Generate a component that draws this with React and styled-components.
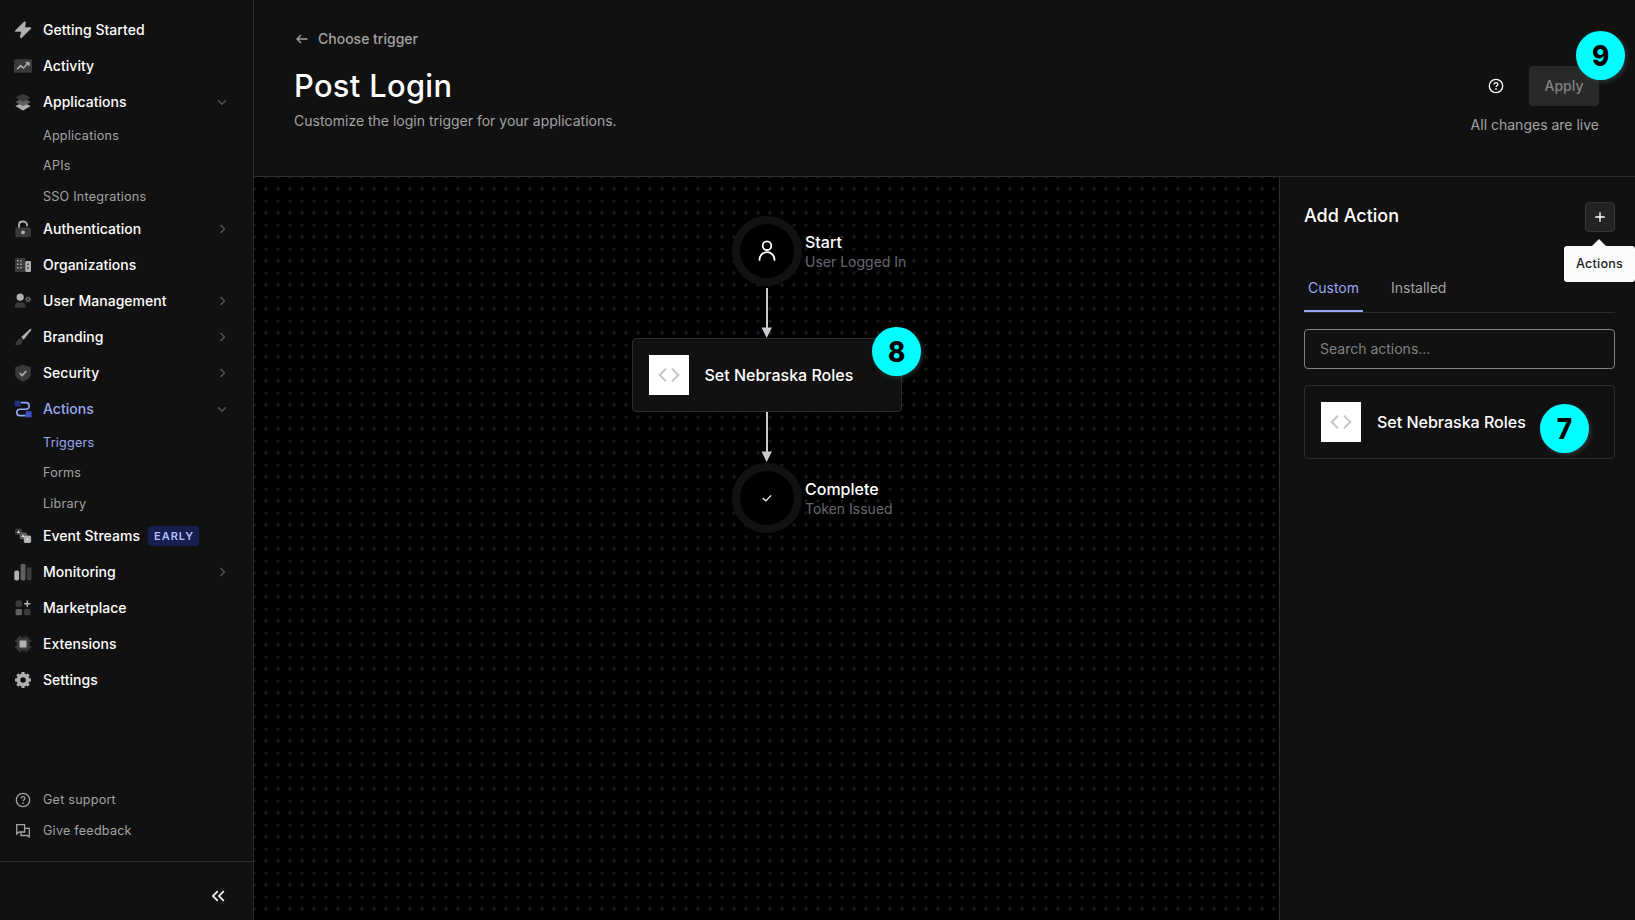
import React from 'react';
import styled, { createGlobalStyle, css } from 'styled-components';

const Global = createGlobalStyle`
  *, *::before, *::after { box-sizing: border-box; }
  body {
    margin: 0;
    background: #111;
    color: #fff;
    font-family: Inter, "Liberation Sans", sans-serif;
    font-size: 14px;
  }
  h1, h2, p { margin: 0; }
  svg { display: block; flex: none; }
  button { font: inherit; cursor: pointer; }
`;

/* ---------- shell ---------- */

const Shell = styled.div`
  display: grid;
  grid-template-columns: 254px 1fr;
  height: 100vh;
  min-height: 920px;
  overflow: hidden;
`;

const Sidebar = styled.aside`
  display: flex;
  flex-direction: column;
  background: #111;
  border-right: 1px solid #2e2e2e;
`;

const Nav = styled.nav`
  flex: 1;
  padding-top: 11.5px;
`;

const NavRow = styled.a`
  display: flex;
  align-items: center;
  height: 36px;
  padding: 0 22px 0 14px;
  font-weight: 500;
  font-size: 14px;
  letter-spacing: 0.03px;
  color: ${(p) => (p.$active ? '#99a7f1' : '#fff')};
  white-space: nowrap;
`;

const NavLabel = styled.span`
  margin-left: 11px;
`;

const NavChevron = styled.span`
  margin-left: auto;
  color: #555;
`;

const SubRow = styled.a`
  display: flex;
  align-items: center;
  height: 30.4px;
  padding: 1.3px 0 0 43px;
  font-size: 12.6px;
  letter-spacing: 0.22px;
  color: ${(p) => (p.$active ? '#99a7f1' : '#a3a3a3')};
`;

const EarlyTag = styled.span`
  display: flex;
  align-items: center;
  height: 20px;
  margin-left: 8px;
  padding: 0 5px 0 6px;
  border-radius: 4px;
  background: #171e50;
  color: #b2bcf5;
  font-size: 11px;
  font-weight: 600;
  letter-spacing: 1px;
`;

const SupportLinks = styled.div`
  display: flex;
  flex-direction: column;
  padding-bottom: 15px;
`;

const SupportRow = styled.a`
  display: flex;
  align-items: center;
  gap: 12px;
  height: 31px;
  padding: 0 0 0 15px;
  font-size: 12.6px;
  letter-spacing: 0.22px;
  color: #a3a3a3;
`;

const CollapseBar = styled.div`
  display: flex;
  justify-content: flex-end;
  align-items: center;
  height: 59px;
  padding: 10px 27px 0 0;
  border-top: 1px solid #2e2e2e;
`;

const Main = styled.main`
  display: grid;
  grid-template-rows: 177px 1fr;
  min-width: 0;
`;

/* ---------- header ---------- */

const Header = styled.header`
  display: flex;
  justify-content: space-between;
  padding: 0 36px 0 40px;
  border-bottom: 1px solid #2e2e2e;
`;

const Heading = styled.div`
  display: flex;
  flex-direction: column;
  padding-top: 28px;
`;

const BackLink = styled.a`
  display: flex;
  align-items: center;
  gap: 8px;
  height: 22px;
  padding-bottom: 1px;
  font-size: 14px;
  font-weight: 500;
  color: #a3a3a3;
`;

const Title = styled.h1`
  margin-top: 16px;
  font-size: 30.800px;
  line-height: 40px;
  font-weight: 500;
  letter-spacing: 0.35px;
`;

const Subtitle = styled.p`
  margin-top: 4px;
  font-size: 14px;
  line-height: 22px;
  color: #a3a3a3;
`;

const HeaderSide = styled.div`
  display: flex;
  flex-direction: column;
  align-items: flex-end;
  padding-top: 66px;
`;

const HeaderActions = styled.div`
  display: flex;
  align-items: center;
  gap: 25px;
`;

const ApplyButton = styled.button`
  position: relative;
  width: 70px;
  height: 40px;
  padding: 0 0 2px;
  border: 0;
  border-radius: 4px;
  background: #292929;
  color: #828282;
  font-size: 14px;
  font-weight: 500;
`;

const Status = styled.p`
  margin-top: 8px;
  font-size: 14px;
  line-height: 22px;
  color: #a3a3a3;
`;

/* ---------- numbered markers ---------- */

const MarkerDisc = styled.span`
  position: absolute;
  top: ${(p) => p.$top}px;
  right: ${(p) => p.$right}px;
  display: flex;
  align-items: center;
  justify-content: center;
  width: 49px;
  height: 49px;
  padding-left: 1px;
  border-radius: 50%;
  background: #00ffff;
  color: #000;
  box-shadow: 2px 2px 4px rgba(60, 75, 75, 0.6);
`;

const MarkerDigit = styled.span`
  font-size: 29px;
  font-weight: 800;
  transform: scaleX(0.9);
`;

const Marker = ({ children, top, right }) => (
  <MarkerDisc $top={top} $right={right}>
    <MarkerDigit>{children}</MarkerDigit>
  </MarkerDisc>
);

/* ---------- canvas ---------- */

const Workspace = styled.div`
  display: grid;
  grid-template-columns: 1fr 356px;
  min-height: 0;
`;

const Canvas = styled.section`
  display: flex;
  flex-direction: column;
  align-items: center;
  padding-top: 39px;
  background-color: #000;
  background-image: radial-gradient(circle at 6px 6px, #1b1b20 0.8px, transparent 2.2px);
  background-size: 12px 12px;
  background-position: 6px 6px;
`;

const Stop = styled.div`
  position: relative;
  display: flex;
  align-items: center;
  justify-content: center;
  width: 70px;
  height: 70px;
  border: 8px solid #111;
  border-radius: 50%;
  background: #000;
`;

const StopText = styled.div`
  position: absolute;
  left: 65.5px;
  top: 8px;
  white-space: nowrap;
`;

const StopTitle = styled.p`
  font-size: 16px;
  line-height: 20px;
  font-weight: 500;
`;

const StopNote = styled.p`
  font-size: 14px;
  line-height: 20px;
  color: #65676e;
`;

const Connector = styled.svg`
  margin-top: ${(p) => p.$before || 0}px;
  margin-bottom: ${(p) => p.$after || 0}px;
`;

const ActionCard = styled.div`
  position: relative;
  display: flex;
  align-items: center;
  gap: 16px;
  width: ${(p) => p.$width || 'auto'};
  height: 74px;
  padding: 0 16px;
  border: 1px solid #2e2e2e;
  border-radius: 4px;
  background: #111;
  font-size: 16px;
  font-weight: 500;
`;

const CodeTile = styled.span`
  display: flex;
  align-items: center;
  justify-content: center;
  width: 40px;
  height: 40px;
  background: #fff;
`;

/* ---------- side panel ---------- */

const Panel = styled.section`
  padding: 25px 20px 0 24px;
  border-left: 1px solid #2e2e2e;
  background: #111;
`;

const PanelHead = styled.div`
  display: flex;
  justify-content: space-between;
`;

const PanelTitle = styled.h2`
  font-size: 18px;
  line-height: 28px;
  font-weight: 500;
`;

const AddButton = styled.button`
  position: relative;
  display: flex;
  align-items: center;
  justify-content: center;
  width: 30px;
  height: 30px;
  padding: 0;
  border: 1px solid #363636;
  border-radius: 4px;
  background: #232323;
  color: #fff;
`;

const Tooltip = styled.span`
  position: absolute;
  top: 43px;
  right: -21px;
  display: flex;
  align-items: center;
  justify-content: center;
  width: 71px;
  height: 36px;
  padding-bottom: 1px;
  border-radius: 3px;
  background: #fbfbfb;
  color: #1e1e1e;
  font-size: 12.6px;
  font-weight: 500;
  letter-spacing: 0.2px;

  &::before {
    content: '';
    position: absolute;
    top: -7px;
    left: 28px;
    border: 7px solid transparent;
    border-top: 0;
    border-bottom-color: #fbfbfb;
  }
`;

const Tabs = styled.div`
  display: flex;
  gap: 24px;
  height: 49px;
  margin-top: 32px;
  border-bottom: 1px solid #2e2e2e;
`;

const Tab = styled.button`
  height: 48px;
  padding: 0 4px;
  border: 0;
  border-bottom: 2px solid transparent;
  background: none;
  color: #a3a3a3;
  font-size: 14px;
  ${(p) =>
    p.$active &&
    css`
      color: #99a7f1;
      border-bottom-color: #99a7f1;
    `}
`;

const Search = styled.input`
  display: block;
  width: 100%;
  height: 40px;
  margin: 16px 0;
  padding: 0 15px 2px;
  border: 1px solid #828282;
  border-radius: 4px;
  background: transparent;
  color: #fff;
  font: inherit;
  font-size: 14px;
  &::placeholder { color: #828282; opacity: 1; }
`;

/* ---------- icons ---------- */

const Icon = ({ children, size = 18, ...rest }) => (
  <svg width={size} height={size} viewBox={`0 0 ${size} ${size}`} fill="none" aria-hidden="true" {...rest}>
    {children}
  </svg>
);

const LIGHT = '#b0b0b0';
const MID = '#606060';
const DARK = '#3a3a3a';

const icons = {
  bolt: (
    <Icon><path d="M10 1 1.3 9.6c-.5.5-.2 1 .4 1h5.6L6.3 16c-.1.9.8 1.3 1.4.7L16.7 7.7c.5-.5.2-1.1-.5-1.1H10.8L11.5 1.7C11.6.8 10.6.4 10 1z" fill={LIGHT} stroke={LIGHT} strokeWidth=".5" /></Icon>
  ),
  activity: (
    <Icon>
      <rect x="0" y="2.3" width="18" height="13.5" rx="1.2" fill={DARK} />
      <path d="M3.5 11.7 6.6 8.6 9.3 11 13.6 6.8" stroke={LIGHT} strokeWidth="1.5" strokeLinecap="round" strokeLinejoin="round" />
      <path d="M11.5 5.2h3.8V9z" fill={LIGHT} stroke={LIGHT} strokeWidth=".6" strokeLinejoin="round" />
    </Icon>
  ),
  layers: (
    <Icon>
      <path d="m9 9.5 7.7 3.6L9 17.5l-7.7-4.4z" fill={LIGHT} />
      <path d="m9 5 7.7 4L9 13.2 1.3 9z" fill={MID} />
      <path d="m9 .7 7.7 3.8L9 8.7 1.3 4.5z" fill={DARK} />
    </Icon>
  ),
  lock: (
    <Icon>
      <path d="M5 8V4.9C5 2.8 6.8 1.5 9 1.5c2.3 0 4 1.4 4 3.6v.3" stroke={LIGHT} strokeWidth="1.9" strokeLinecap="round" />
      <rect x="1.3" y="7.5" width="15.5" height="9.7" rx="1.5" fill={DARK} />
      <circle cx="9" cy="12.3" r="1.9" fill={LIGHT} />
    </Icon>
  ),
  building: (
    <Icon>
      <rect x="1" y="2" width="10.5" height="14" rx="1.2" fill={DARK} />
      <path d="M3 4.8h1.5M6.3 4.8h1.5M3 8.3h1.5M6.3 8.3h1.5M3 11.8h1.5M6.3 11.8h1.5" stroke={LIGHT} strokeWidth="1.4" />
      <rect x="11.3" y="4.9" width="5.7" height="11.1" rx="1.2" fill={LIGHT} />
      <path d="M13.3 8.3h1.5M13.3 12h1.5" stroke="#333" strokeWidth="1.5" />
    </Icon>
  ),
  users: (
    <Icon>
      <circle cx="6.2" cy="5.2" r="3.6" fill={LIGHT} />
      <path d="M.9 15.7v-1.7a3.5 3.5 0 0 1 3.5-3.5H8a3.5 3.5 0 0 1 3.5 3.5v1.7z" fill={DARK} />
      <circle cx="14.1" cy="7.4" r="1.7" stroke={MID} strokeWidth="1.5" />
      <path d="M11 7.4h1M16.2 7.4h1M12.6 4.8l.5.9M15.6 4.8l-.5.9M12.6 10l.5-.9M15.6 10l-.5-.9" stroke={MID} strokeWidth="1.2" />
    </Icon>
  ),
  brush: (
    <Icon>
      <path d="M16 1.2 7.4 9l2.2 2.5L17 2.3c.6-.9-.2-1.8-1-1.1z" fill={LIGHT} stroke={LIGHT} strokeWidth=".4" />
      <path d="M4.9 10.8c1.5-.9 3 .1 3.5 1.3.7 1.7-.2 4.9-4.2 5.1-1.2.1-2.3-.2-3.3-.7 1.9-1 1.3-4.2 4-5.7z" fill={DARK} />
    </Icon>
  ),
  shield: (
    <Icon>
      <path d="M9 .8 16.8 3.2v6c0 4.3-3.3 6.7-7.8 8.2-4.5-1.5-7.8-3.9-7.8-8.2v-6z" fill={DARK} />
      <path d="m5.8 9.2 2.3 2.3 4.2-4.5" stroke={LIGHT} strokeWidth="1.7" />
    </Icon>
  ),
  flow: (
    <Icon>
      <path d="M7 2.6h4.8a3.3 3.3 0 0 1 0 6.6H6a3.2 3.2 0 0 0 0 6.4h5.5" stroke="#99a7f1" strokeWidth="1.6" />
      <rect x=".6" y=".6" width="6" height="6" fill="#22307f" />
      <rect x="11.6" y="11.3" width="6" height="6" fill="#3f52c8" />
    </Icon>
  ),
  stream: (
    <Icon>
      <rect x="1" y="1.5" width="7.2" height="6.6" rx="1.5" fill={DARK} />
      <rect x="5.7" y="5.4" width="7.2" height="6.8" rx="1.5" fill={MID} />
      <rect x="9.8" y="8.6" width="7.3" height="7.4" rx="1.5" fill={LIGHT} />
      <path d="m4.5 3.3 1.6 2.8H2.9zM9 7.3l1.6 2.6H7.4zM13.5 10.8l1.6 2.7h-3.2z" fill="#ddd" />
    </Icon>
  ),
  bars: (
    <Icon>
      <rect x=".3" y="7.5" width="4.8" height="10" rx="1.7" fill={LIGHT} />
      <rect x="6.6" y=".8" width="4.9" height="16.7" rx="1.7" fill={MID} />
      <rect x="12.8" y="4.3" width="4.8" height="13.2" rx="1.7" fill={DARK} />
    </Icon>
  ),
  market: (
    <Icon>
      <rect x="1.6" y="1.5" width="6.3" height="6.2" rx="1.2" fill={DARK} />
      <path d="M13.3 1.5v6.4M10.1 4.7h6.4" stroke={LIGHT} strokeWidth="1.5" />
      <rect x="1.6" y="10" width="6.3" height="6.2" rx="1.2" fill={MID} />
      <rect x="10.1" y="10" width="6.3" height="6.2" rx="1.2" fill={DARK} />
    </Icon>
  ),
  chip: (
    <Icon>
      <rect x="2.5" y="2.5" width="13" height="13" rx="2.5" fill={DARK} />
      <path d="M6 .8v2M12 .8v2M6 15.2v2M12 15.2v2M.8 6h2M.8 12h2M15.2 6h2M15.2 12h2" stroke={DARK} strokeWidth="1.5" />
      <rect x="5.5" y="5.5" width="7" height="7" rx=".8" fill={LIGHT} />
    </Icon>
  ),
  gear: (
    <Icon>
      <circle cx="9" cy="9" r="4.6" stroke={LIGHT} strokeWidth="3.7" />
      <g stroke={LIGHT} strokeWidth="3.1">
        <path d="M9 1v3M9 14v3M1 9h3M14 9h3M3.3 3.3l2.2 2.2M12.5 12.5l2.2 2.2M3.3 14.7l2.2-2.2M12.5 5.5l2.2-2.2" />
      </g>
    </Icon>
  ),
};

const Chevron = ({ down }) => (
  <Icon>
    <path d={down ? 'm5 7.2 4 4 4-4' : 'm7.5 5 4 4-4 4'} stroke="currentColor" strokeWidth="1.4" />
  </Icon>
);

const HelpIcon = () => (
  <Icon size={16}>
    <circle cx="8" cy="8" r="6.7" stroke="currentColor" strokeWidth="1.3" />
    <path d="M6.1 6.6C6.1 5.4 6.9 4.7 8 4.7s1.9.7 1.9 1.7c0 1.3-1.9 1.4-1.9 2.7" stroke="currentColor" strokeWidth="1.3" />
    <circle cx="8" cy="11.1" r=".85" fill="currentColor" />
  </Icon>
);

const FeedbackIcon = () => (
  <Icon size={16}>
    <path d="M1.7 11V1.7H9.6V9H4z" stroke="currentColor" strokeWidth="1.3" />
    <path d="M9.6 5.3h4.7V14l-2-1.5H6V9" stroke="currentColor" strokeWidth="1.3" />
  </Icon>
);

const CodeIcon = () => (
  <svg width="24" height="24" viewBox="0 0 24 24" fill="none" stroke="#c4c4c4" strokeWidth="2" aria-hidden="true">
    <path d="M9 5.6 2.7 12 9 18.4M15 5.6 21.3 12 15 18.4" />
  </svg>
);

const Arrow = (props) => (
  <Connector width="12" height="50" viewBox="0 0 12 50" aria-hidden="true" {...props}>
    <path d="M6 0v42" stroke="#c9cace" strokeWidth="2" />
    <path d="M.5 39.5h10.4L5.7 50z" fill="#c9cace" />
  </Connector>
);

/* ---------- data ---------- */

const NAV = [
  { label: 'Getting Started', icon: 'bolt' },
  { label: 'Activity', icon: 'activity' },
  { label: 'Applications', icon: 'layers', items: ['Applications', 'APIs', 'SSO Integrations'] },
  { label: 'Authentication', icon: 'lock', more: true },
  { label: 'Organizations', icon: 'building' },
  { label: 'User Management', icon: 'users', more: true },
  { label: 'Branding', icon: 'brush', more: true },
  { label: 'Security', icon: 'shield', more: true },
  { label: 'Actions', icon: 'flow', active: true, current: 'Triggers', items: ['Triggers', 'Forms', 'Library'] },
  { label: 'Event Streams', icon: 'stream', tag: 'EARLY' },
  { label: 'Monitoring', icon: 'bars', more: true },
  { label: 'Marketplace', icon: 'market' },
  { label: 'Extensions', icon: 'chip' },
  { label: 'Settings', icon: 'gear' },
];

const NavGroup = ({ entry }) => (
  <>
    <NavRow $active={entry.active}>
      {icons[entry.icon]}
      <NavLabel>{entry.label}</NavLabel>
      {entry.tag && <EarlyTag>{entry.tag}</EarlyTag>}
      {(entry.more || entry.items) && (
        <NavChevron><Chevron down={!!entry.items} /></NavChevron>
      )}
    </NavRow>
    {entry.items?.map((item) => (
      <SubRow key={item} $active={item === entry.current}>{item}</SubRow>
    ))}
  </>
);

export default function App() {
  return (
    <>
      <Global />
      <Shell>
        <Sidebar>
          <Nav>
            {NAV.map((entry) => <NavGroup key={entry.label} entry={entry} />)}
          </Nav>
          <SupportLinks>
            <SupportRow><HelpIcon />Get support</SupportRow>
            <SupportRow><FeedbackIcon />Give feedback</SupportRow>
          </SupportLinks>
          <CollapseBar>
            <Icon size={16}>
              <path d="M7.8 3.2 3 8l4.8 4.8M13.8 3.2 9 8l4.8 4.8" stroke="#fff" strokeWidth="1.7" />
            </Icon>
          </CollapseBar>
        </Sidebar>

        <Main>
          <Header>
            <Heading>
              <BackLink>
                <Icon size={16}>
                  <path d="M13.5 8H3M7 4 3 8l4 4" stroke="currentColor" strokeWidth="1.4" />
                </Icon>
                Choose trigger
              </BackLink>
              <Title>Post Login</Title>
              <Subtitle>Customize the login trigger for your applications.</Subtitle>
            </Heading>
            <HeaderSide>
              <HeaderActions>
                <HelpIcon />
                <ApplyButton>
                  Apply
                  <Marker top={-35} right={-26}>9</Marker>
                </ApplyButton>
              </HeaderActions>
              <Status>All changes are live</Status>
            </HeaderSide>
          </Header>

          <Workspace>
            <Canvas>
              <Stop>
                <svg width="20" height="24" viewBox="0 0 20 24" fill="none" stroke="#fff" strokeWidth="1.8" aria-hidden="true">
                  <circle cx="10" cy="6.7" r="4.3" />
                  <path d="M2.5 21.7v-1a7.5 7.5 0 0 1 15 0v1" />
                </svg>
                <StopText>
                  <StopTitle>Start</StopTitle>
                  <StopNote>User Logged In</StopNote>
                </StopText>
              </Stop>
              <Arrow $before={2} />
              <ActionCard $width="270px">
                <CodeTile><CodeIcon /></CodeTile>
                Set Nebraska Roles
                <Marker top={-12} right={-20}>8</Marker>
              </ActionCard>
              <Arrow $after={1} />
              <Stop>
                <svg width="12" height="12" viewBox="0 0 12 12" fill="none" aria-hidden="true">
                  <path d="m1.8 6 3 3 5.4-5.6" stroke="#fff" strokeWidth="1.2" />
                </svg>
                <StopText>
                  <StopTitle>Complete</StopTitle>
                  <StopNote>Token Issued</StopNote>
                </StopText>
              </Stop>
            </Canvas>

            <Panel>
              <PanelHead>
                <PanelTitle>Add Action</PanelTitle>
                <AddButton aria-label="Add action">
                  <Icon size={12}>
                    <path d="M6 1.2v9.6M1.2 6h9.6" stroke="currentColor" strokeWidth="1.4" />
                  </Icon>
                  <Tooltip>Actions</Tooltip>
                </AddButton>
              </PanelHead>
              <Tabs>
                <Tab $active>Custom</Tab>
                <Tab>Installed</Tab>
              </Tabs>
              <Search placeholder="Search actions..." />
              <ActionCard>
                <CodeTile><CodeIcon /></CodeTile>
                Set Nebraska Roles
                <Marker top={18} right={25}>7</Marker>
              </ActionCard>
            </Panel>
          </Workspace>
        </Main>
      </Shell>
    </>
  );
}
